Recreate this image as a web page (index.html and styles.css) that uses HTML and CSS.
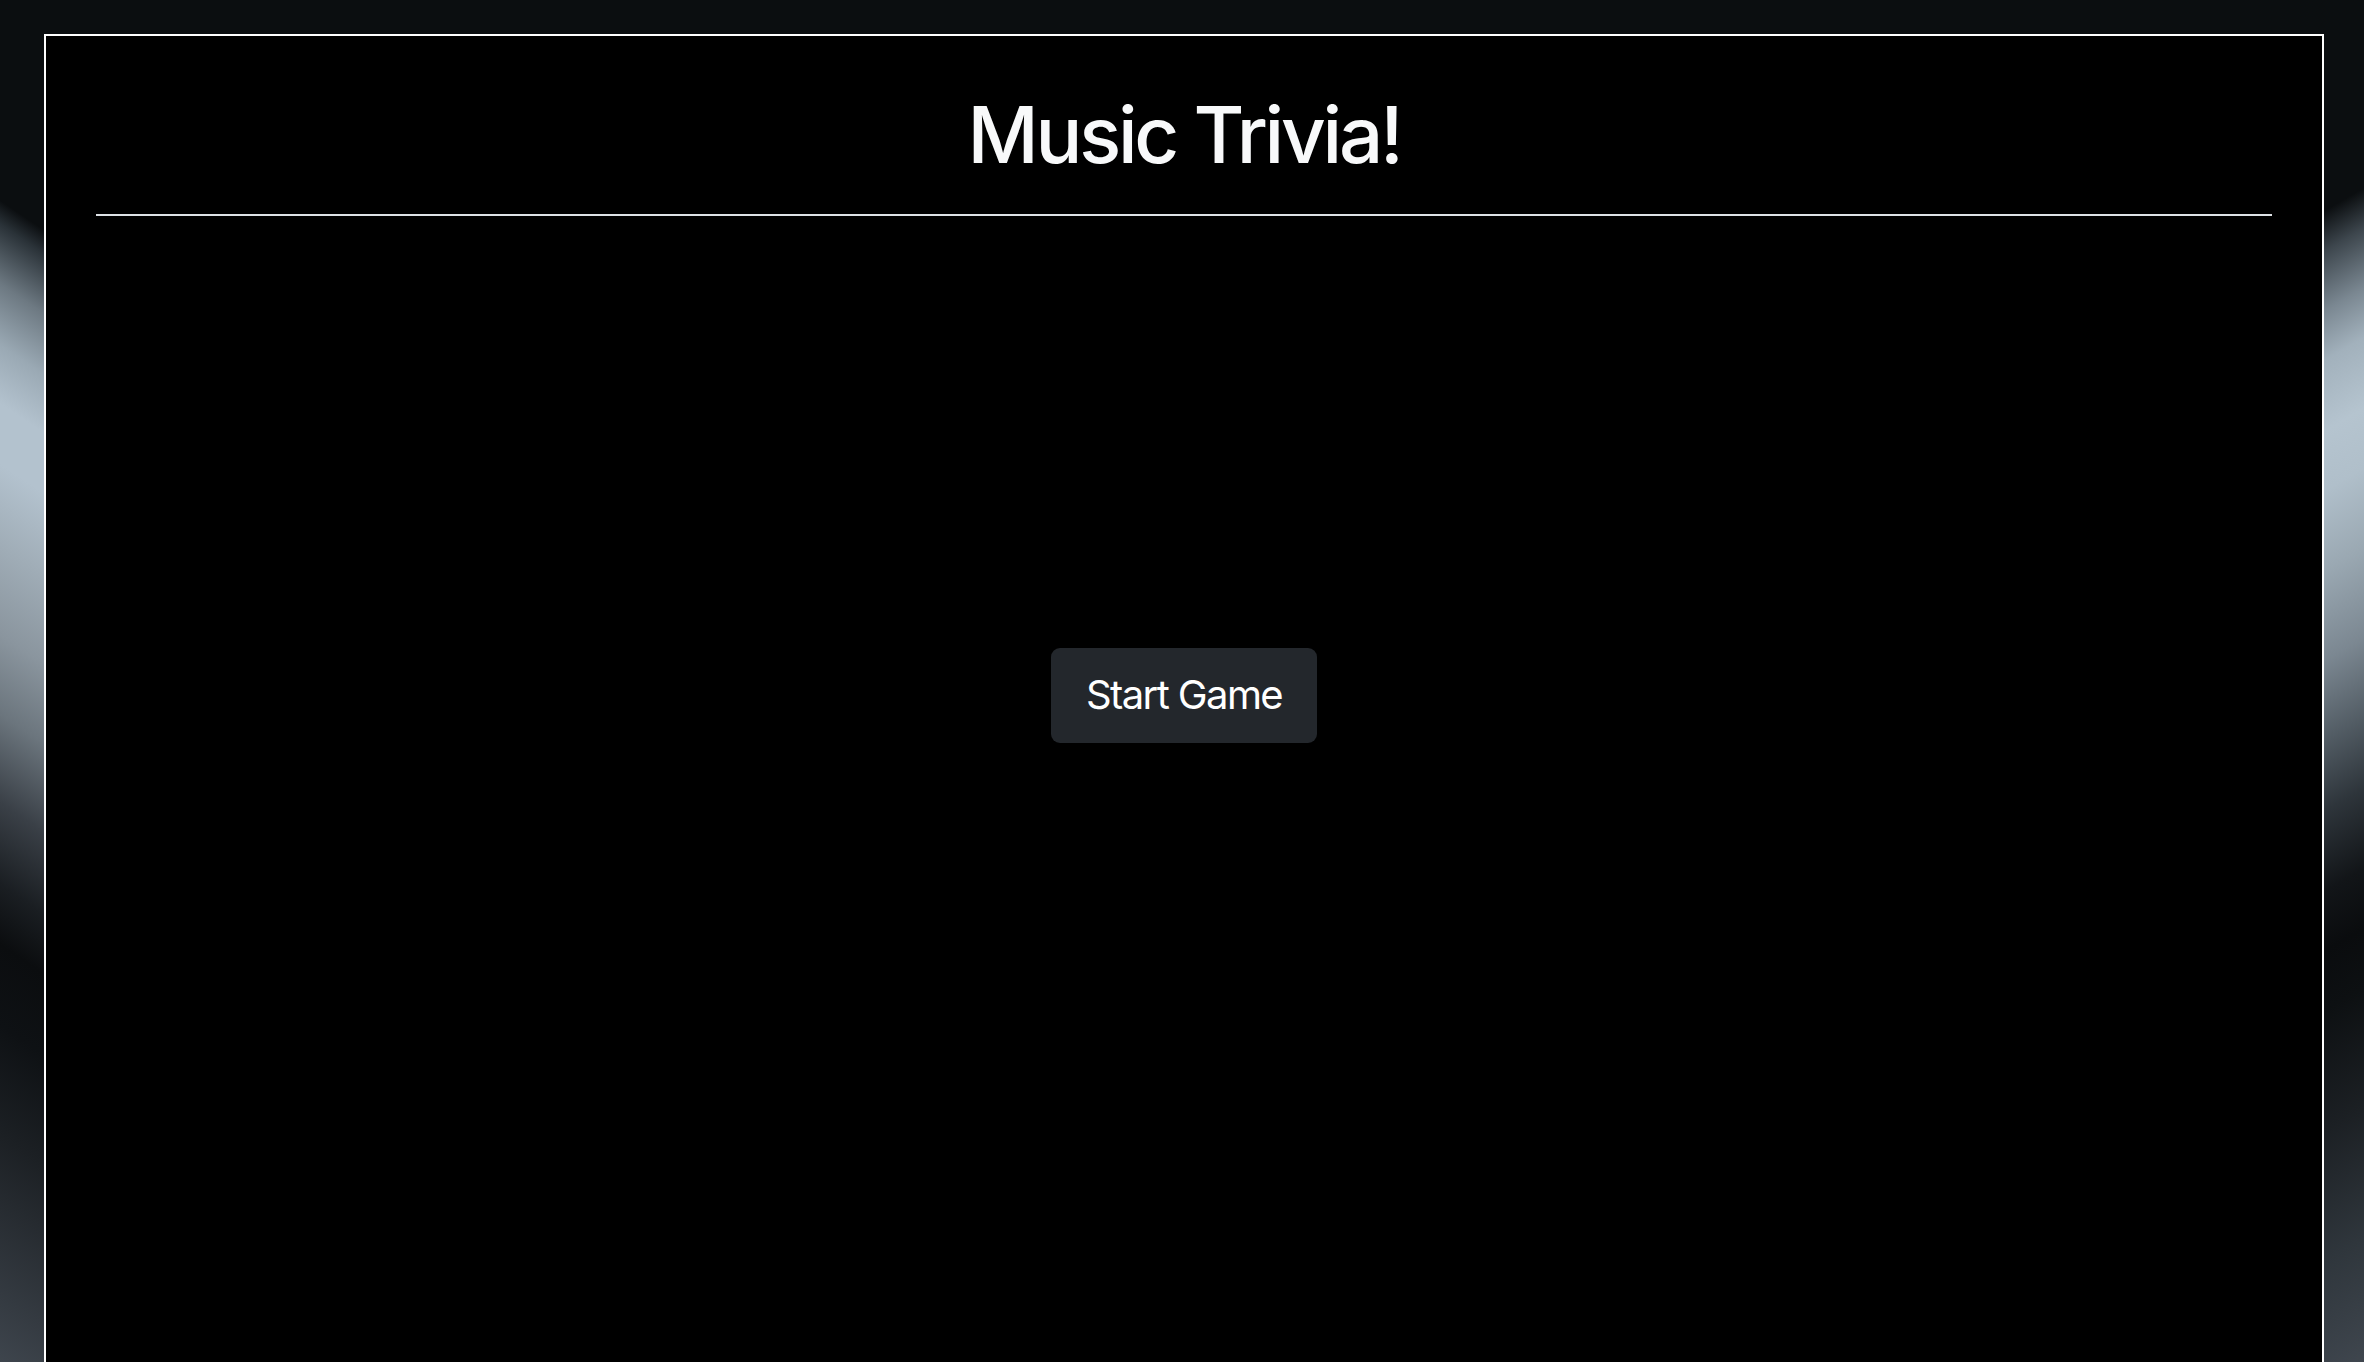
FILE: index.html
```html
<!DOCTYPE html>
<html lang="en">
<head>
<meta charset="utf-8">
<title>Music Trivia!</title>
<link rel="stylesheet" href="styles.css">
</head>
<body>
  <main class="container">
    <header class="header">
      <h1 class="title">Music Trivia!</h1>
    </header>
    <hr class="divider">
    <section class="game">
      <button class="btn-start" type="button">Start Game</button>
    </section>
  </main>
</body>
</html>
```

FILE: styles.css
```css
html, body {
  margin: 0;
  padding: 0;
  height: 100%;
  overflow: hidden;
}

body {
  font-family: Inter, "Noto Sans", "Liberation Sans", sans-serif;
  background-color: #0b0e10;
  background-image:
    linear-gradient(214deg, #0b0e10 0%, #0b0e10 16.6%, #2a3238 18.3%, #6d7982 22.6%, #9aa9b4 27%, #b3c2ce 31.2%, #b3c2ce 35.5%, #a0adb7 41.3%, #8a959e 47.8%, #6b757d 53.5%, #3a4047 59.8%, #1a1e22 65.7%, #0b0d0f 70%, #0e1114 75.8%, #1c2024 83.7%, #3e454d 100%),
    linear-gradient(150deg, #0b0e10 0%, #0b0e10 15.3%, #3d464d 18.2%, #7a8791 22.5%, #a2b1bc 26.1%, #b5c4cf 31.2%, #b0bfca 35.5%, #9aa8b2 41.3%, #7b8791 47.8%, #525c64 53.5%, #2e353b 58.6%, #121518 64.4%, #0a0c0e 68.7%, #0d1012 73%, #1c2024 81.7%, #2f363c 91%, #3f464e 100%);
  background-size: 46px 100%, 42px 100%;
  background-position: left top, right top;
  background-repeat: no-repeat;
}

.container {
  box-sizing: border-box;
  height: calc(100vh - 34px);
  margin: 34px 40px 0 44px;
  padding: 0 50px;
  background: #000;
  border: 2px solid #ffffff;
  border-bottom: none;
  color: #f8f9fa;
}

.header {
  padding-top: 52px;
}

.title {
  margin: 0;
  text-align: center;
  font-size: 78px;
  font-weight: 500;
  line-height: 1.2;
  letter-spacing: -0.042em;
  color: #f8f9fa;
}

.divider {
  margin: 32px 0 0;
  border: 0;
  border-top: 2px solid #dee2e6;
  opacity: 1;
}

.game {
  padding-top: 432px;
  text-align: center;
}

.btn-start {
  font-family: inherit;
  font-size: 40px;
  font-weight: 400;
  line-height: 1.5;
  letter-spacing: -0.04em;
  padding: 17.5px 35px;
  color: #ffffff;
  background: #23272c;
  border: 0;
  border-radius: 9px;
  cursor: pointer;
}
```
